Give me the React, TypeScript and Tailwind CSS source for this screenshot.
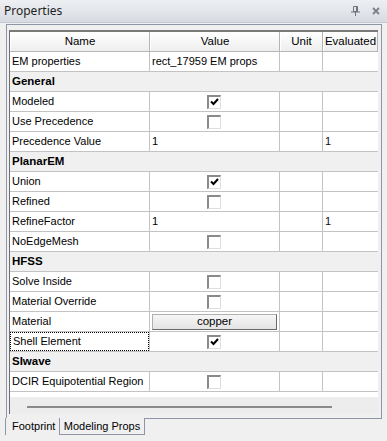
import React from "react";

type Row =
  | { kind: "section"; label: string }
  | {
      kind: "prop";
      name: string;
      value?: string;
      check?: boolean;
      button?: string;
      evaluated?: string;
      focus?: boolean;
    };

const rows: Row[] = [
  { kind: "prop", name: "EM properties", value: "rect_17959 EM props" },
  { kind: "section", label: "General" },
  { kind: "prop", name: "Modeled", check: true },
  { kind: "prop", name: "Use Precedence", check: false },
  { kind: "prop", name: "Precedence Value", value: "1", evaluated: "1" },
  { kind: "section", label: "PlanarEM" },
  { kind: "prop", name: "Union", check: true },
  { kind: "prop", name: "Refined", check: false },
  { kind: "prop", name: "RefineFactor", value: "1", evaluated: "1" },
  { kind: "prop", name: "NoEdgeMesh", check: false },
  { kind: "section", label: "HFSS" },
  { kind: "prop", name: "Solve Inside", check: false },
  { kind: "prop", name: "Material Override", check: false },
  { kind: "prop", name: "Material", button: "copper" },
  { kind: "prop", name: "Shell Element", check: true, focus: true },
  { kind: "section", label: "SIwave" },
  { kind: "prop", name: "DCIR Equipotential Region", check: false },
];

const CheckBox = ({ checked }: { checked: boolean }) => (
  <div className="w-[14px] h-[14px] bg-white border-t-2 border-l-2 border-t-[#8a8a8a] border-l-[#8a8a8a] border-b border-r border-b-[#dedede] border-r-[#dedede] flex items-center justify-center">
    {checked && (
      <svg width="9" height="8" viewBox="0 0 9 8">
        <path d="M1 3.5 L3.5 6 L8 1" stroke="#000" strokeWidth="2" fill="none" />
      </svg>
    )}
  </div>
);

const HeaderCell = ({ label, className }: { label: string; className: string }) => (
  <div
    className={`${className} h-full flex items-center justify-center border-r border-r-[#b5b5b5] border-l border-l-white bg-gradient-to-b from-white to-[#eeeeee]`}
  >
    {label}
  </div>
);

export default function App() {
  return (
    <div
      className="w-[387px] h-[441px] bg-[#f0f0f0] text-[11px] text-black overflow-hidden whitespace-nowrap"
      style={{ fontFamily: '"Liberation Sans", Arial, sans-serif' }}
    >
      {/* TITLE */}
      <div className="h-[23px] flex items-center justify-between pl-[4px] pr-[7px] bg-gradient-to-b from-[#eef0f3] to-[#d7dbe1] border-b border-b-[#c4c9d1]">
        <span className="text-[12px] text-[#1e1e1e]" style={{ fontFamily: '"Noto Sans", sans-serif' }}>
          Properties
        </span>
        <div className="flex items-center gap-[12px]">
          <svg width="9" height="10" viewBox="0 0 9 10">
            <path d="M2.5 0.5 H6.5 V5.5 H2.5 Z" fill="none" stroke="#6f737a" />
            <path d="M0 6 H9" stroke="#6f737a" />
            <path d="M4.5 6 V10" stroke="#6f737a" />
            <path d="M5.5 1 V5" stroke="#6f737a" />
          </svg>
          <svg width="8" height="8" viewBox="0 0 8 8">
            <path d="M1 1 L7 7 M7 1 L1 7" stroke="#7c8088" strokeWidth="1.8" />
          </svg>
        </div>
      </div>

      {/* PANEL */}
      <div className="ml-[6px] mt-[1px] w-[376px] h-[394px] border-t border-l border-r border-[#8e96a6] pl-[2px] pr-[3px] pt-[5px] pb-[4px] flex flex-col">
        <div className="flex-1 flex flex-col border-l border-l-[#6f6f6f] border-t-2 border-t-[#7a7a7a] bg-white">
          {/* HEADER */}
          <div className="h-[20px] shrink-0 flex border-b border-b-[#b5b5b5] text-[11.5px]">
            <HeaderCell label="Name" className="w-[140px]" />
            <HeaderCell label="Value" className="w-[130px]" />
            <HeaderCell label="Unit" className="w-[43px]" />
            <HeaderCell label="Evaluated" className="flex-1" />
          </div>

          {/* ROWS */}
          {rows.map((r, i) =>
            r.kind === "section" ? (
              <div
                key={i}
                className="h-[20px] shrink-0 flex items-center pl-[2px] bg-[#f0f0f0] border-b border-b-[#c3c3c3] font-bold text-[11.5px]"
              >
                {r.label}
              </div>
            ) : (
              <div key={i} className="h-[20px] shrink-0 flex border-b border-b-[#c3c3c3]">
                <div className="w-[140px] border-r border-r-[#c3c3c3] flex">
                  <div
                    className={`flex-1 flex items-center pl-[2px] ${
                      r.focus ? "border border-dotted border-black" : ""
                    }`}
                  >
                    {r.name}
                  </div>
                </div>
                <div className="w-[130px] border-r border-r-[#c3c3c3] flex items-center pl-[2px]">
                  {r.value && <span>{r.value}</span>}
                  {r.check !== undefined && (
                    <div className="flex-1 flex justify-center pr-[4px]">
                      <CheckBox checked={r.check} />
                    </div>
                  )}
                  {r.button && (
                    <div className="w-[125px] h-[16px] flex items-center justify-center border border-[#b0b0b0] border-r-[#6a6a6a] border-b-[#6a6a6a] bg-gradient-to-b from-[#f6f6f6] to-[#e4e4e4] text-[11.5px]">
                      {r.button}
                    </div>
                  )}
                </div>
                <div className="w-[43px] border-r border-r-[#c3c3c3]" />
                <div className="flex-1 flex items-center pl-[2px] text-[#1a0a20]">{r.evaluated}</div>
              </div>
            )
          )}

          {/* SCROLL */}
          <div className="h-[5px] shrink-0 bg-white" />
          <div className="flex-1 bg-[#ededed] flex items-center pl-[17px]">
            <div className="w-[305px] h-[2px] bg-[#8a8a8a] mt-[2px]" />
          </div>
        </div>
      </div>

      {/* TABS */}
      <div className="flex h-[17px] ml-[5px]">
        <div className="w-[54px] border-l border-l-[#8e96a6] flex items-center pl-[6px]">Footprint</div>
        <div className="w-[86px] border-l border-r border-b border-[#8e96a6] flex items-center justify-center">
          Modeling Props
        </div>
        <div className="w-[237px] h-[1px] bg-[#8e96a6]" />
      </div>
    </div>
  );
}
